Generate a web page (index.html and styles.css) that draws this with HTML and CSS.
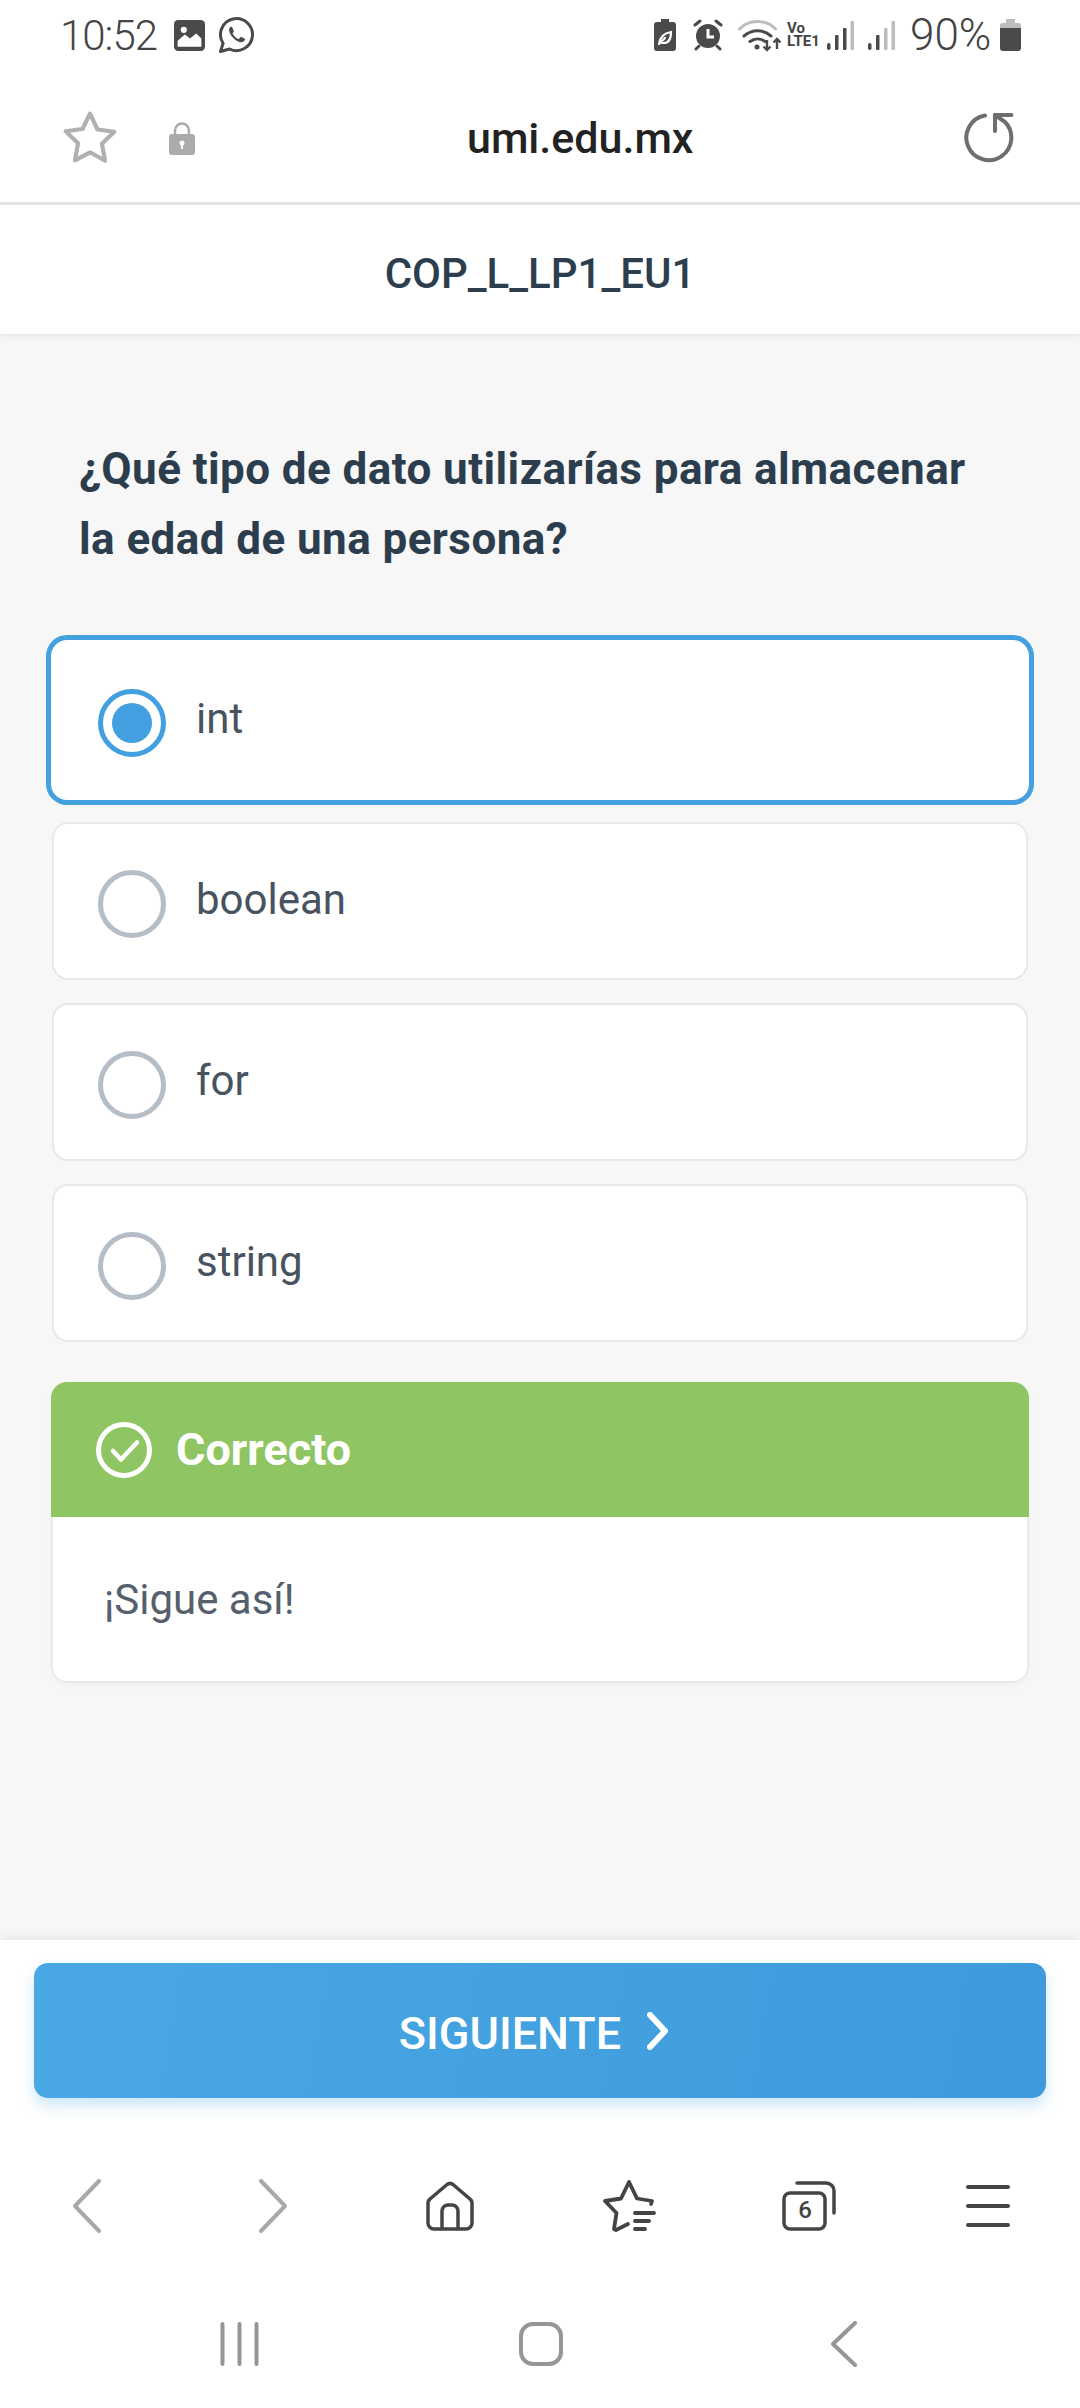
FILE: index.html
```html
<!DOCTYPE html>
<html>
<head>
    <meta charset="utf-8">
    <link rel="stylesheet" href="styles.css">
</head>
<body>
    <!-- Status bar -->
    <div class="status-bar">
        <span class="clock">10:52</span>
        <svg class="st-image" width="31" height="31" viewBox="0 0 30 30">
            <rect width="30" height="30" rx="4" fill="#4a4a4a"/>
            <circle cx="9.500" cy="9.500" r="3" fill="#fff"/>
            <path d="M3.500 26v-6l7-6 5 4 6-5 5 5v8z" fill="#fff"/>
        </svg>
        <svg class="st-whatsapp" width="36" height="36" viewBox="0 0 36 36">
            <path d="M1.500 34.500l2.600-8.200A16 16 0 1 1 10.600 32z" fill="none" stroke="#4a4a4a" stroke-width="3" stroke-linejoin="round"/>
            <path d="M12 9.500c-1.300 1-2.200 2.400-1.800 4.500 1 4.800 6.200 10.200 11.300 11.200 2 .3 3.700-.7 4.400-2.100.3-.7.2-1.100-.2-1.400l-3.300-1.700c-.5-.2-.8-.1-1.100.2l-1.200 1.500c-.3.3-.6.3-1 .2-2.300-1-4.300-2.900-5.400-5.100-.2-.4-.1-.6.1-.9l.9-1.100c.2-.3.2-.6.1-.9l-1.400-3.400c-.3-.7-.8-.8-1.400-.8z" fill="#4a4a4a"/>
        </svg>
        <div class="status-right">
            <svg class="st-leaf" width="22" height="32" viewBox="0 0 22 32">
                <path d="M7 0h8v3h4a3 3 0 0 1 3 3v23a3 3 0 0 1-3 3H3a3 3 0 0 1-3-3V6a3 3 0 0 1 3-3h4z" fill="#4a4a4a"/>
                <path d="M5 25c1-7 5-11 12-12 0 7-2 11-7 11-1 0-2 0-3-.5M5 25l6-6" fill="none" stroke="#fff" stroke-width="2.200" stroke-linecap="round"/>
            </svg>
            <svg class="st-alarm" width="30" height="32" viewBox="0 0 30 32">
                <circle cx="15" cy="17" r="12" fill="#4a4a4a"/>
                <path d="M2 6l5-4M28 6l-5-4M6 27l-3 3M24 27l3 3" stroke="#4a4a4a" stroke-width="3" stroke-linecap="round"/>
                <path d="M15 10v8h6" fill="none" stroke="#fff" stroke-width="3"/>
            </svg>
            <svg class="st-wifi" width="45" height="34" viewBox="0 0 45 34">
                <path d="M1.500 11C11 1 28 1 37.500 11" fill="none" stroke="#bdbdbd" stroke-width="3" stroke-linecap="round"/>
                <path d="M6 18c8-7 19-7 27 0M12 23.500c4.500-3.500 10.500-3.500 15 0" fill="none" stroke="#4a4a4a" stroke-width="3" stroke-linecap="round"/>
                <circle cx="19" cy="29" r="2.500" fill="#4a4a4a"/>
                <path d="M29 22v10M25.500 28.500l3.500 3.500 3.500-3.500M39 31V21M35.500 24.500l3.500-3.500 3.500 3.500" fill="none" stroke="#4a4a4a" stroke-width="2.400"/>
            </svg>
            <span class="volte">Vo<br>LTE1</span>
            <svg class="st-signal" width="27" height="29" viewBox="0 0 27 29">
                <rect x="0" y="22" width="3.500" height="7" rx="1.700" fill="#4a4a4a"/>
                <rect x="8" y="14" width="3.500" height="15" rx="1" fill="#4a4a4a"/>
                <rect x="16" y="7" width="3.500" height="22" rx="1" fill="#4a4a4a"/>
                <rect x="23.500" y="0" width="3.500" height="29" rx="1" fill="#bdbdbd"/>
            </svg>
            <svg class="st-signal-2" width="27" height="29" viewBox="0 0 27 29">
                <rect x="0" y="22" width="3.500" height="7" rx="1.700" fill="#4a4a4a"/>
                <rect x="8" y="14" width="3.500" height="15" rx="1" fill="#4a4a4a"/>
                <rect x="16" y="7" width="3.500" height="22" rx="1" fill="#bdbdbd"/>
                <rect x="23.500" y="0" width="3.500" height="29" rx="1" fill="#bdbdbd"/>
            </svg>
            <span class="battery-text">90%</span>
            <svg class="st-battery" width="21" height="32" viewBox="0 0 21 32">
                <path d="M6 0h9v4H6z" fill="#bdbdbd"/>
                <path d="M2 4h17a2 2 0 0 1 2 2v3H0V6a2 2 0 0 1 2-2z" fill="#bdbdbd"/>
                <path d="M0 9h21v20a3 3 0 0 1-3 3H3a3 3 0 0 1-3-3z" fill="#4a4a4a"/>
            </svg>
        </div>
    </div>

    <!-- Browser address bar -->
    <div class="url-bar">
        <svg class="url-star" width="56" height="56" viewBox="0 0 54 54">
            <path d="M27 3.500l7.200 15.300 16.300 2.200-12 11.500 3 16.500L27 40.800 12.500 48.500l3-16.500-12-11.500 16.300-2.200z" fill="none" stroke="#b0b0b0" stroke-width="4" stroke-linejoin="round"/>
        </svg>
        <svg class="url-lock" width="26" height="34" viewBox="0 0 26 34">
            <path d="M6 14V9.500a7 7 0 0 1 14 0V14" fill="none" stroke="#ababab" stroke-width="2.500"/>
            <rect y="13" width="26" height="21" rx="3" fill="#ababab"/>
            <circle cx="13" cy="22" r="2.500" fill="#fff"/>
            <rect x="12" y="22" width="2" height="6" fill="#fff"/>
        </svg>
        <span class="url-text">umi.edu.mx</span>
        <svg class="url-reload" width="50" height="50" viewBox="0 0 50 50">
            <path d="M21 2.500A22.500 22.500 0 1 0 40.500 8.500L31 2" fill="none" stroke="#6e6e6e" stroke-width="4" stroke-linecap="round"/>
            <path d="M47.500 2H31v16" fill="none" stroke="#6e6e6e" stroke-width="4" stroke-linecap="round" stroke-linejoin="round"/>
        </svg>
    </div>

    <!-- Quiz title -->
    <div class="title-bar">COP_L_LP1_EU1</div>

    <div class="quiz">
        <h1 class="question">¿Qué tipo de dato utilizarías para almacenar la edad de una persona?</h1>

        <!-- Answer options -->
        <div class="options">
            <div class="option selected">
                <span class="radio"></span>
                <span class="option-label">int</span>
            </div>
            <div class="option">
                <span class="radio"></span>
                <span class="option-label">boolean</span>
            </div>
            <div class="option">
                <span class="radio"></span>
                <span class="option-label">for</span>
            </div>
            <div class="option">
                <span class="radio"></span>
                <span class="option-label">string</span>
            </div>
        </div>

        <!-- Feedback card -->
        <div class="feedback">
            <div class="feedback-head">
                <svg width="56" height="56" viewBox="0 0 56 56">
                    <circle cx="28" cy="28" r="25.500" fill="none" stroke="#fff" stroke-width="5"/>
                    <path d="M17 29l8 8.500 16-17" fill="none" stroke="#fff" stroke-width="4.500" stroke-linecap="round" stroke-linejoin="round"/>
                </svg>
                <span>Correcto</span>
            </div>
            <div class="feedback-body">¡Sigue así!</div>
        </div>
    </div>

    <div class="bottom">
        <button type="button" class="next">
            <span class="next-label">SIGUIENTE</span>
            <svg width="21" height="38" viewBox="0 0 21 38">
                <path d="M3 3l15 16L3 35" fill="none" stroke="#fff" stroke-width="6" stroke-linecap="round" stroke-linejoin="round"/>
            </svg>
        </button>

        <!-- Browser toolbar -->
        <div class="toolbar">
            <svg class="tb-back" width="28" height="54" viewBox="0 0 28 54">
                <path d="M26 2L2 27l24 25" fill="none" stroke="#a8a8a8" stroke-width="4" stroke-linecap="round" stroke-linejoin="round"/>
            </svg>
            <svg class="tb-forward" width="28" height="54" viewBox="0 0 28 54">
                <path d="M2 2l24 25L2 52" fill="none" stroke="#a8a8a8" stroke-width="4" stroke-linecap="round" stroke-linejoin="round"/>
            </svg>
            <svg class="tb-home" width="48" height="50" viewBox="0 0 48 50">
                <path d="M2 22a5 5 0 0 1 2-4L21 3.500a5 5 0 0 1 6 0L44 18a5 5 0 0 1 2 4v20a6 6 0 0 1-6 6H8a6 6 0 0 1-6-6z" fill="none" stroke="#444" stroke-width="3.500" stroke-linejoin="round"/>
                <path d="M16 48V30a6 6 0 0 1 6-6h4a6 6 0 0 1 6 6v18" fill="none" stroke="#444" stroke-width="3.500"/>
            </svg>
            <svg class="tb-bookmarks" width="54" height="54" viewBox="0 0 54 54">
                <path d="M49 25l1-3-15-2.500L27 3l-8 16.500L3 22l11.500 12L12 50l2 1 12-6" fill="none" stroke="#444" stroke-width="3.800" stroke-linecap="round" stroke-linejoin="round"/>
                <path d="M33 34h19M33 42h14M33 50h10" fill="none" stroke="#444" stroke-width="3.800" stroke-linecap="round"/>
            </svg>
            <div class="tb-tabs">
                <svg width="54" height="50" viewBox="0 0 54 50">
                    <rect x="2" y="12" width="41" height="36" rx="6" fill="none" stroke="#444" stroke-width="3.500"/>
                    <path d="M15 2h29a8 8 0 0 1 8 8v22" fill="none" stroke="#444" stroke-width="3.500" stroke-linecap="round"/>
                </svg>
                <span class="tab-count">6</span>
            </div>
            <svg class="tb-menu" width="44" height="44" viewBox="0 0 44 44">
                <path d="M2 3h40M2 22h40M2 41h40" fill="none" stroke="#444" stroke-width="4" stroke-linecap="round"/>
            </svg>
        </div>

        <!-- System navigation -->
        <div class="sys-nav">
            <svg class="sys-recent" width="39" height="44" viewBox="0 0 39 44">
                <path d="M2.500 2v40M19.500 2v40M36.500 2v40" fill="none" stroke="#969696" stroke-width="4" stroke-linecap="round"/>
            </svg>
            <svg class="sys-home" width="44" height="44" viewBox="0 0 44 44">
                <rect x="2" y="2" width="40" height="40" rx="12" fill="none" stroke="#969696" stroke-width="4"/>
            </svg>
            <svg class="sys-back" width="26" height="46" viewBox="0 0 26 46">
                <path d="M24 2L2 23l22 21" fill="none" stroke="#969696" stroke-width="4" stroke-linecap="round" stroke-linejoin="round"/>
            </svg>
        </div>
    </div>
</body>
</html>
```

FILE: styles.css
```css
* {
    box-sizing: border-box;
}

body {
    font-family: Roboto, "Noto Sans", sans-serif;
    display: flex;
    flex-direction: column;
    width: 1080px;
    height: 2408px;
    margin: 0;
    background-color: #f7f7f7;
    overflow: hidden;
}

svg {
    display: block;
    flex-shrink: 0;
}

/* Status bar */
.status-bar {
    display: flex;
    align-items: center;
    height: 66px;
    padding: 4px 59px 0 60px;
    background: #fff;
    color: #444;
}

.clock {
    width: 97px;
    font-size: 42px;
    font-weight: 300;
    letter-spacing: -1px;
    white-space: nowrap;
}

.st-image {
    margin-left: 17px;
}

.st-whatsapp {
    margin-left: 14px;
}

.status-right {
    display: flex;
    align-items: center;
    margin-left: auto;
}

.st-wifi {
    margin-left: 15px;
}

.st-alarm {
    margin-left: 17px;
}

.volte {
    margin-left: 4px;
    font-size: 15px;
    font-weight: 700;
    line-height: 13px;
    width: 35px;
}

.st-signal {
    margin-left: 5px;
}

.st-signal-2 {
    margin-left: 14px;
}

.battery-text {
    width: 82px;
    margin-left: 15px;
    font-size: 44px;
    font-weight: 300;
    white-space: nowrap;
}

.st-battery {
    margin-left: 8px;
}

/* Address bar */
.url-bar {
    display: flex;
    align-items: center;
    height: 139px;
    padding: 8px 66px 0 62px;
    background: #fff;
    border-bottom: 3px solid #e6e6e6;
}

.url-lock {
    margin-left: 51px;
}

.url-text {
    margin-left: 272px;
    font-size: 43px;
    font-weight: 500;
    color: #222;
}

.url-reload {
    margin-left: auto;
}

/* Title */
.title-bar {
    position: relative;
    height: 129px;
    padding-top: 8px;
    display: flex;
    align-items: center;
    justify-content: center;
    background: #fff;
    box-shadow: 0 2px 8px rgba(0, 0, 0, 0.08);
    font-size: 42px;
    font-weight: 500;
    color: #2c3e4e;
}

/* Quiz content */
.quiz {
    flex: 1;
    padding: 100px 52px 0;
}

.question {
    margin: 0 0 67px;
    padding: 0 30px 0 27px;
    font-size: 44px;
    font-weight: 700;
    letter-spacing: 0.42px;
    line-height: 70px;
    color: #2c3e4e;
}

.options {
    display: flex;
    flex-direction: column;
    gap: 23px;
}

.option {
    display: flex;
    align-items: center;
    gap: 30px;
    height: 158px;
    padding-left: 44px;
    background: #fff;
    border: 2px solid #e8e8e8;
    border-radius: 16px;
}

.option.selected {
    height: 160px;
    margin: -1px;
    padding-left: 45px;
    border-color: #fff;
    box-shadow: 0 0 0 5px #45a1de;
}

.radio {
    display: flex;
    align-items: center;
    justify-content: center;
    width: 68px;
    height: 68px;
    margin-top: 6px;
    border: 5px solid #b5bec6;
    border-radius: 50%;
    background: #fff;
}

.selected .radio {
    border-color: #42a0e0;
}

.selected .radio::after {
    content: "";
    width: 40px;
    height: 40px;
    border-radius: 50%;
    background: #42a0e0;
}

.option-label {
    margin-bottom: 3px;
    font-size: 42px;
    color: #47535f;
}

.feedback {
    margin: 40px -1px 0;
    border-radius: 16px;
    background: #fff;
    box-shadow: 0 2px 6px rgba(0, 0, 0, 0.04);
    overflow: hidden;
}

.feedback-head {
    display: flex;
    align-items: center;
    gap: 24px;
    height: 135px;
    padding-left: 45px;
    background: #8fc663;
    font-size: 45px;
    font-weight: 700;
    color: #fff;
}

.feedback-body {
    display: flex;
    align-items: center;
    height: 166px;
    padding-left: 51px;
    border: 2px solid #e8e8e8;
    border-top: none;
    border-radius: 0 0 16px 16px;
    font-size: 42px;
    color: #55606c;
}

/* Bottom actions */
.bottom {
    position: relative;
    height: 468px;
    padding-top: 23px;
    background: #fff;
    box-shadow: 0 -3px 10px rgba(0, 0, 0, 0.07);
}

.next {
    display: flex;
    align-items: center;
    justify-content: center;
    gap: 26px;
    width: 1012px;
    height: 135px;
    margin-left: 34px;
    padding: 0 13px 0 0;
    border: none;
    border-radius: 14px;
    background: linear-gradient(100deg, #4aa8e5, #3d9adb);
    box-shadow: 0 8px 14px rgba(66, 160, 224, 0.25);
    font-family: inherit;
    font-size: 45px;
    font-weight: 500;
    color: #fff;
}

.next-label {
    margin-top: 5px;
}

.toolbar {
    display: flex;
    align-items: center;
    height: 54px;
    margin-top: 81px;
    padding-left: 73px;
}

.tb-forward {
    margin-left: 158px;
}

.tb-home {
    margin-left: 139px;
}

.tb-bookmarks {
    margin-left: 128px;
}

.tb-tabs {
    position: relative;
    margin-left: 126px;
}

.tab-count {
    position: absolute;
    left: 13px;
    top: 15px;
    width: 20px;
    text-align: center;
    font-size: 24px;
    font-weight: 500;
    color: #444;
}

.tb-menu {
    margin-left: 130px;
}

.sys-nav {
    display: flex;
    align-items: center;
    height: 46px;
    margin-top: 88px;
    padding-left: 220px;
}

.sys-home {
    margin-left: 260px;
}

.sys-back {
    margin-left: 268px;
}
```
